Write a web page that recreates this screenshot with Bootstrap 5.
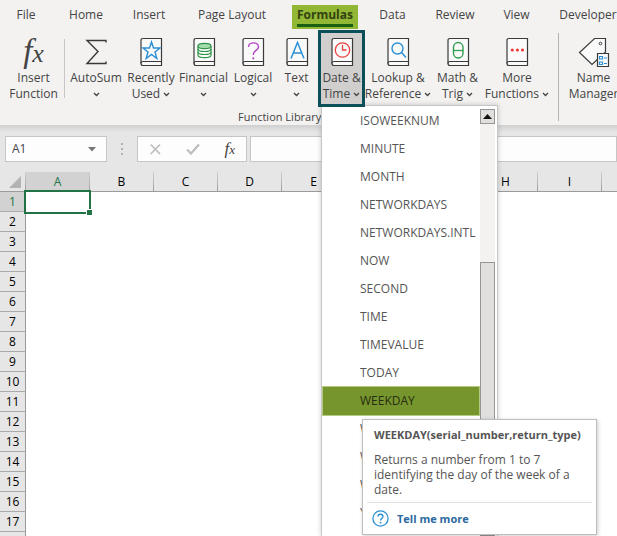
<!DOCTYPE html>
<html lang="en">
<head>
<meta charset="utf-8">
<meta name="viewport" content="width=device-width, initial-scale=1">
<title>Spreadsheet - Formulas</title>
<link href="https://cdn.jsdelivr.net/npm/bootstrap@5.3.0/dist/css/bootstrap.min.css" rel="stylesheet">
<style>
body{font-family:"Open Sans","Noto Sans",sans-serif;font-size:12px;line-height:16px;color:#444;background:#fff}
button,input{font:inherit;color:inherit}
.app{height:100vh}
.ribbon{background:#f3f2f1}
.tabs{display:grid;grid-template-columns:52px 68px 58px 108px 78px 57px 68px 55px 88px;height:30px;padding-top:5px}
.tabs a{color:#444;text-decoration:none;line-height:20px;justify-self:center;white-space:nowrap}
.tabs a.current{background:#92b735;color:#33420f;font-weight:700;height:24px;padding:0 5px}
.tabs a.current::after{content:"";display:block;height:3px;background:#1a5f12;margin-top:-1px}
.tools{display:grid;grid-template-columns:3px 61px 2px 60px 50px 55px 44px 43px 47px 66px 53px 66px 8px 2px 67px;grid-template-rows:77px;height:77px}
.tool{border:0;background:none;padding:7px 0 0;white-space:nowrap;display:flex;flex-direction:column;align-items:center}
.tool svg.ico{width:32px;height:30px;flex:none;margin-bottom:3px}
.tool .chev{width:7px;height:5px;vertical-align:1px}
.tool.open{background:#d0cfce;border:3px solid #0b4f58;padding-top:4px;position:relative;z-index:2}
.rule{width:1px;background:#c8c6c4;height:59px;margin-top:9px}
.rule.tall{background:#b5b3b1;height:88px;margin-top:3px}
.group{padding-left:238px;height:18px;font-size:11px;line-height:20px}
.fxglyph{font:italic 33px/28px "Liberation Serif",serif;height:30px;margin-bottom:3px}
.fxglyph small{font-size:26px}
.bar{background:linear-gradient(#cfcfcf,#e6e6e6 7px);padding:11px 0 10px 5px}
.box{background:#fdfdfd;border:1px solid #c6c6c6;height:26px}
.namebox{width:102px}
.namebox input{border:0;background:none;width:74px;padding:0 0 0 6px;outline:0}
.formula{min-width:0;margin-left:3px}
.fxbox{width:110px;padding:0 11px 0 12px}
.fxbox button,.namebox button{border:0;background:none;padding:0;line-height:0}
.fxbox .mini{font:italic 17px/20px "Liberation Serif",serif;color:#444}
.fxbox .mini small{font-size:13px}
.sheet{table-layout:fixed;width:666px;border-collapse:separate;border-spacing:0;color:#000}
.sheet col{width:64px}
.sheet col.rownums{width:26px}
.sheet th{font-weight:400;text-align:center;padding:0;background:#e6e6e6;height:20px;line-height:19px}
.sheet thead th{border:solid;border-image:linear-gradient(#d4d4d4,#999) 1;border-width:0 1px 1px 0}
.sheet tbody th{border-right:1px solid #999;border-bottom:1px solid #aaa}
.sheet thead th.sel,.sheet tbody th.sel{background:#d2d2d2;color:#217346}
.sheet td{padding:0}
.cellsel{position:relative;width:67px;height:24px;margin:-3px 0 -3px -2px;border:2px solid #217346}
.cellsel::after{content:"";position:absolute;right:-3px;bottom:-3px;width:6px;height:6px;background:#217346;border:solid #fff;border-width:1px 0 0 1px}
.fnmenu{position:absolute;left:321px;top:105px;bottom:0;width:177px;background:#fff;border:1px solid #c6c6c6;border-bottom:0;box-shadow:0 0 5px #0003;padding:1px 2px 0 1px;z-index:1;overflow:hidden}
.fnlist{width:156px}
.fnlist button{display:block;width:100%;height:28px;border:0;background:none;text-align:left;padding:0 0 0 37px;color:#555;white-space:nowrap}
.fnlist button.hot{background:#76962d;color:#262d12;outline:1px solid #b4ca80}
.scroller{width:15px;background:#f3f2f1;margin-top:2px}
.scroller button{height:15px;border:1px solid #979593;background:#e1dfdd;padding:0;line-height:0}
.thumb{border:1px solid #979593;background:#e1dfdd;margin-top:138px;flex:1}
.tip{position:absolute;left:362px;top:419px;width:235px;height:116px;background:#fff;border:1px solid #bebebe;box-shadow:1px 1px 4px #0003;z-index:3;padding:7px 4px;color:#555;line-height:15px}
.tiptitle{font-size:11px;font-weight:700;padding-left:7px}
.tipbody{padding:10px 0 0 7px;white-space:nowrap}
.tip a{color:#2b68a0;font-weight:700;text-decoration:none;font-size:11px}
.tip .foot{border-top:1px solid #e1e1e1;margin-top:5px;padding:7px 5px}
</style>
<script src="https://cdn.jsdelivr.net/npm/bootstrap@5.3.0/dist/js/bootstrap.bundle.min.js"></script>
</head>
<body>
<svg class="d-none" aria-hidden="true">
<symbol id="book" viewBox="0 0 32 30"><path d="M8 1.500H26.500V28.500H8Q6 28.500 6 26.500V3.500Q6 1.500 8 1.500Z" fill="#fafafa" stroke="#3b3a39" stroke-width="1.200"/><path d="M6 26.500Q6 24.500 8 24.500H26.500" fill="none" stroke="#3b3a39" stroke-width="1.200"/></symbol>
<symbol id="chev" viewBox="0 0 7 5"><path d="M1 1L3.500 3.500L6 1" fill="none" stroke="#444" stroke-width="1.300"/></symbol>
</svg>
<div class="app position-relative overflow-hidden">
<header class="ribbon">
<nav class="tabs" aria-label="Ribbon tabs">
<a href="#">File</a><a href="#">Home</a><a href="#">Insert</a><a href="#">Page Layout</a><a href="#" class="current" aria-current="page">Formulas</a><a href="#">Data</a><a href="#">Review</a><a href="#">View</a><a href="#">Developer</a>
</nav>
<div class="tools">
<span></span>
<button class="tool"><span class="fxglyph">f<small>x</small></span><span>Insert</span><span>Function</span></button>
<span class="rule"></span>
<button class="tool"><svg class="ico" viewBox="0 0 32 30"><path d="M26 5.500V3.500H7L18 14.500L7 26.500H26V24.500" fill="none" stroke="#3b3a39" stroke-width="1.400"/></svg><span>AutoSum</span><span><svg class="chev"><use href="#chev"/></svg></span></button>
<button class="tool"><svg class="ico" viewBox="0 0 32 30"><use href="#book"/><path d="M16.500 5L18.500 11H25L20 15L21.800 21.500L16.500 17.500L11.200 21.500L13 15L8 11H14.500Z" fill="none" stroke="#2b8fd6" stroke-width="1.400"/></svg><span>Recently</span><span>Used <svg class="chev"><use href="#chev"/></svg></span></button>
<button class="tool"><svg class="ico" viewBox="0 0 32 30"><use href="#book"/><g fill="#fafafa" stroke="#2f9447" stroke-width="1.200"><path d="M10 9V18C10 21.500 23 21.500 23 18V9"/><path d="M10 12C10 15.300 23 15.300 23 12M10 15C10 18.300 23 18.300 23 15" fill="none"/><ellipse cx="16.500" cy="9" rx="6.500" ry="2.600" fill="#a5dcae"/></g></svg><span>Financial</span><span><svg class="chev"><use href="#chev"/></svg></span></button>
<button class="tool"><svg class="ico" viewBox="0 0 32 30"><use href="#book"/><path d="M11.500 10C11.500 4.500 21.500 4.500 21.500 10C21.500 13.500 16.300 13 16.300 18" fill="none" stroke="#b146c2" stroke-width="1.400"/><circle cx="16.300" cy="21.300" r="1.100" fill="#b146c2"/></svg><span>Logical</span><span><svg class="chev"><use href="#chev"/></svg></span></button>
<button class="tool"><svg class="ico" viewBox="0 0 32 30"><use href="#book"/><path d="M10 21.500L16.500 5.500L23 21.500M12.500 16H20.500" fill="none" stroke="#2b8fd6" stroke-width="1.500"/></svg><span>Text</span><span><svg class="chev"><use href="#chev"/></svg></span></button>
<button class="tool open" aria-expanded="true"><svg class="ico" viewBox="0 0 32 30"><use href="#book"/><circle cx="16.500" cy="13" r="7.200" fill="none" stroke="#e8403d" stroke-width="1.300"/><path d="M16.500 8V13H20.500" fill="none" stroke="#e8403d" stroke-width="1.300"/></svg><span>Date &amp;</span><span>Time <svg class="chev"><use href="#chev"/></svg></span></button>
<button class="tool"><svg class="ico" viewBox="0 0 32 30"><use href="#book"/><circle cx="15.500" cy="11.500" r="5.500" fill="none" stroke="#2b8fd6" stroke-width="1.400"/><path d="M19.500 15.500L24 20.500" stroke="#2b8fd6" stroke-width="1.500"/></svg><span>Lookup &amp;</span><span>Reference <svg class="chev"><use href="#chev"/></svg></span></button>
<button class="tool"><svg class="ico" viewBox="0 0 32 30"><use href="#book"/><rect x="11.500" y="5.500" width="9.500" height="15.500" rx="4.700" fill="none" stroke="#2f9e4f" stroke-width="1.400"/><path d="M11.500 13.500H21" stroke="#2f9e4f" stroke-width="1.300"/></svg><span>Math &amp;</span><span>Trig <svg class="chev"><use href="#chev"/></svg></span></button>
<button class="tool"><svg class="ico" viewBox="0 0 32 30"><use href="#book"/><g fill="#f03a37"><circle cx="11.300" cy="13" r="1.600"/><circle cx="16.400" cy="13" r="1.600"/><circle cx="21.500" cy="13" r="1.600"/></g></svg><span>More</span><span>Functions <svg class="chev"><use href="#chev"/></svg></span></button>
<span></span><span class="rule tall"></span>
<button class="tool"><svg class="ico" viewBox="0 0 32 30"><path d="M16.500 1.500H27.500V15L14 27.500L1.500 15.500Z" fill="#fafafa" stroke="#3b3a39" stroke-width="1.200"/><circle cx="22.500" cy="6.500" r="1.300" fill="none" stroke="#3b3a39"/><path d="M19.500 16.500H30.500V29.500H19.500Z" fill="#fafafa" stroke="#3b3a39" stroke-width="1.200"/><path d="M21.500 19.500h3v2.500h-3zM21.500 25h3v2.500h-3zM26 21h3M26 26.500h3" fill="none" stroke="#2b8fd6" stroke-width="1.200"/></svg><span>Name</span><span>Manager</span></button>
</div>
<div class="group">Function Library</div>
</header>
<div class="bar d-flex">
<div class="box namebox d-flex align-items-center"><input value="A1" aria-label="Name box"><button aria-label="Name list" class="ms-2"><svg width="8" height="5"><path d="M0 0H8L4 4.500Z" fill="#777"/></svg></button></div>
<svg width="30" height="26"><path d="M14 7h2v2h-2zM14 12h2v2h-2zM14 17h2v2h-2z" fill="#b0b0b0"/></svg>
<div class="box fxbox d-flex align-items-center justify-content-between"><button aria-label="Cancel"><svg width="11" height="12" viewBox="0 0 11 12"><path d="M.7 1.500L10 11M10 1.500L.7 11" stroke="#bdbdbd" stroke-width="1.700"/></svg></button><button aria-label="Enter"><svg width="14" height="12" viewBox="0 0 14 12"><path d="M1 6.500L5 10.500L13 1.500" fill="none" stroke="#bdbdbd" stroke-width="2.200"/></svg></button><button class="mini" aria-label="Insert function">f<small>x</small></button></div>
<input class="box formula flex-fill rounded-0" aria-label="Formula bar">
</div>
<table class="sheet" id="sheet"></table>
<div class="fnmenu d-flex justify-content-between">
<div class="fnlist"><button>ISOWEEKNUM</button><button>MINUTE</button><button>MONTH</button><button>NETWORKDAYS</button><button>NETWORKDAYS.INTL</button><button>NOW</button><button>SECOND</button><button>TIME</button><button>TIMEVALUE</button><button>TODAY</button><button class="hot">WEEKDAY</button><button>WEEKNUM</button><button>WORKDAY</button><button>WORKDAY.INTL</button><button>YEAR</button></div>
<div class="scroller d-flex flex-column"><button aria-label="Scroll up"><svg width="9" height="5"><path d="M0 5L4.500 0L9 5Z" fill="#111"/></svg></button><div class="thumb"></div></div>
</div>
<div class="tip" role="tooltip">
<div class="tiptitle">WEEKDAY(serial_number,return_type)</div>
<div class="tipbody">Returns a number from 1 to 7<br>identifying the day of the week of a<br>date.</div>
<div class="foot d-flex align-items-center gap-2"><svg width="17" height="17" viewBox="0 0 17 17"><circle cx="8.500" cy="8.500" r="7.600" fill="none" stroke="#2b8fd6" stroke-width="1.300"/><path d="M6 6.500C6 3.500 11 3.500 11 6.500C11 8.500 8.500 8.300 8.500 10.500" fill="none" stroke="#2b8fd6" stroke-width="1.300"/><circle cx="8.500" cy="12.700" r=".9" fill="#2b8fd6"/></svg><a href="#">Tell me more</a></div>
</div>
</div>
<script>
const cols="ABCDEFGHIJ".split("");
let h='<colgroup><col class="rownums">'+cols.map(()=>"<col>").join("")+'</colgroup><thead><tr><th aria-label="Select all"><svg width="12" height="12" class="float-end me-1"><path d="M12 0V12H0Z" fill="#b3b3b3"/></svg></th>'+cols.map((c,i)=>`<th scope="col"${i?"":' class="sel"'}>${c}</th>`).join("")+"</tr></thead><tbody>";
for(let r=1;r<19;r++)h+=`<tr><th scope="row"${r>1?"":' class="sel"'}>${r}</th>`+cols.map((c,i)=>r==1&&!i?'<td><div class="cellsel"></div></td>':"<td></td>").join("")+"</tr>";
document.getElementById("sheet").innerHTML=h+"</tbody>";
</script>
</body>
</html>
